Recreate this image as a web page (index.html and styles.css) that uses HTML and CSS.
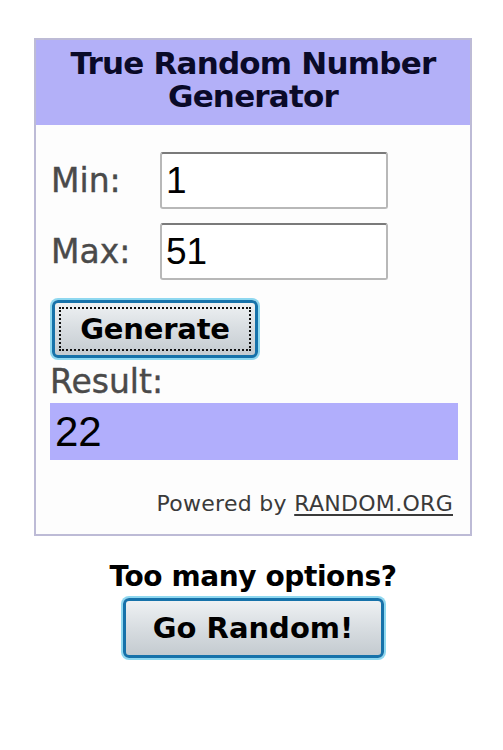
FILE: index.html
```html
<!DOCTYPE html>
<html>
<head>
<meta charset="utf-8">
<link rel="stylesheet" href="styles.css">
</head>
<body>
<div class="page">
  <div class="widget">
    <div class="header">True Random Number<br>Generator</div>
    <div class="body">
      <div class="row">
        <span class="label">Min:</span>
        <div class="input">1</div>
      </div>
      <div class="row">
        <span class="label">Max:</span>
        <div class="input">51</div>
      </div>
      <div class="gen-wrap">
        <div class="btn gen"><span class="focus">Generate</span></div>
      </div>
      <div class="result-label">Result:</div>
      <div class="result">22</div>
      <div class="powered">Powered by <span class="link">RANDOM.ORG</span></div>
    </div>
  </div>
  <div class="footer">
    <div class="question">Too many options?</div>
    <div class="btn go">Go Random!</div>
  </div>
</div>
</body>
</html>
```
FILE: styles.css
```css
html, body {
  margin: 0;
  padding: 0;
  background: #fff;
}
body {
  font-family: "DejaVu Sans", Verdana, sans-serif;
  width: 503px;
  height: 750px;
}
.page {
  padding: 38px 0 0 34px;
}
.widget {
  width: 434px;
  border: 2px solid #bdbbd6;
  background: #fdfdfd;
}
.header {
  background: #b3b0f8;
  height: 85px;
  box-sizing: border-box;
  padding-top: 7px;
  text-align: center;
  font-weight: bold;
  font-size: 31px;
  line-height: 33px;
  color: #0a0a28;
  letter-spacing: -0.8px;
}
.body {
  padding: 27px 14px 0 14px;
  height: 409px;
  box-sizing: border-box;
}
.row {
  display: flex;
  align-items: center;
  margin-bottom: 14px;
}
.label {
  width: 109px;
  padding-left: 1px;
  font-size: 33px;
  color: #4a4a4a;
  -webkit-text-stroke: 0.4px #4a4a4a;
}
.input {
  width: 228px;
  height: 57px;
  box-sizing: border-box;
  border: 2px solid #b8b8b8;
  border-top-color: #7a7a7a;
  border-radius: 3px;
  padding-left: 4px;
  display: flex;
  align-items: center;
  font-family: "Liberation Sans", Arial, sans-serif;
  font-size: 37px;
  color: #000;
  background: #fff;
}
.gen-wrap {
  padding-top: 6px;
  padding-left: 2px;
}
.btn {
  display: flex;
  align-items: center;
  justify-content: center;
  box-sizing: border-box;
  border: 3px solid #1672aa;
  border-radius: 6px;
  background: linear-gradient(#eef1f3, #d8dde1 50%, #c4cbd0);
  color: #000;
  font-size: 29px;
  font-weight: bold;
  box-shadow: 0 0 0 2px #8fd8f0;
}
.gen {
  width: 206px;
  height: 58px;
  padding: 4px;
}
.focus {
  flex: 1;
  align-self: stretch;
  display: flex;
  align-items: center;
  justify-content: center;
  border: 2px dotted #111;
  letter-spacing: -0.2px;
}
.result-label {
  margin-top: 4px;
  font-size: 33px;
  color: #4a4a4a;
  -webkit-text-stroke: 0.4px #4a4a4a;
  line-height: 40px;
}
.result {
  margin-top: 1px;
  width: 408px;
  height: 57px;
  background: #b1aefc;
  box-sizing: border-box;
  padding-left: 5px;
  display: flex;
  align-items: center;
  font-family: "Liberation Sans", Arial, sans-serif;
  font-size: 42px;
  color: #000;
}
.powered {
  margin-top: 31px;
  text-align: right;
  padding-right: 3px;
  font-size: 22px;
  letter-spacing: 0.3px;
  color: #3a3a3a;
}
.link {
  text-decoration: underline;
  text-decoration-thickness: 2px;
  text-underline-offset: 3px;
}
.footer {
  width: 438px;
  display: flex;
  flex-direction: column;
  align-items: center;
  padding-top: 24px;
}
.question {
  font-size: 28px;
  font-weight: bold;
  color: #000;
  line-height: 34px;
  letter-spacing: -0.4px;
}
.go {
  margin-top: 4px;
  width: 261px;
  height: 60px;
}
```
